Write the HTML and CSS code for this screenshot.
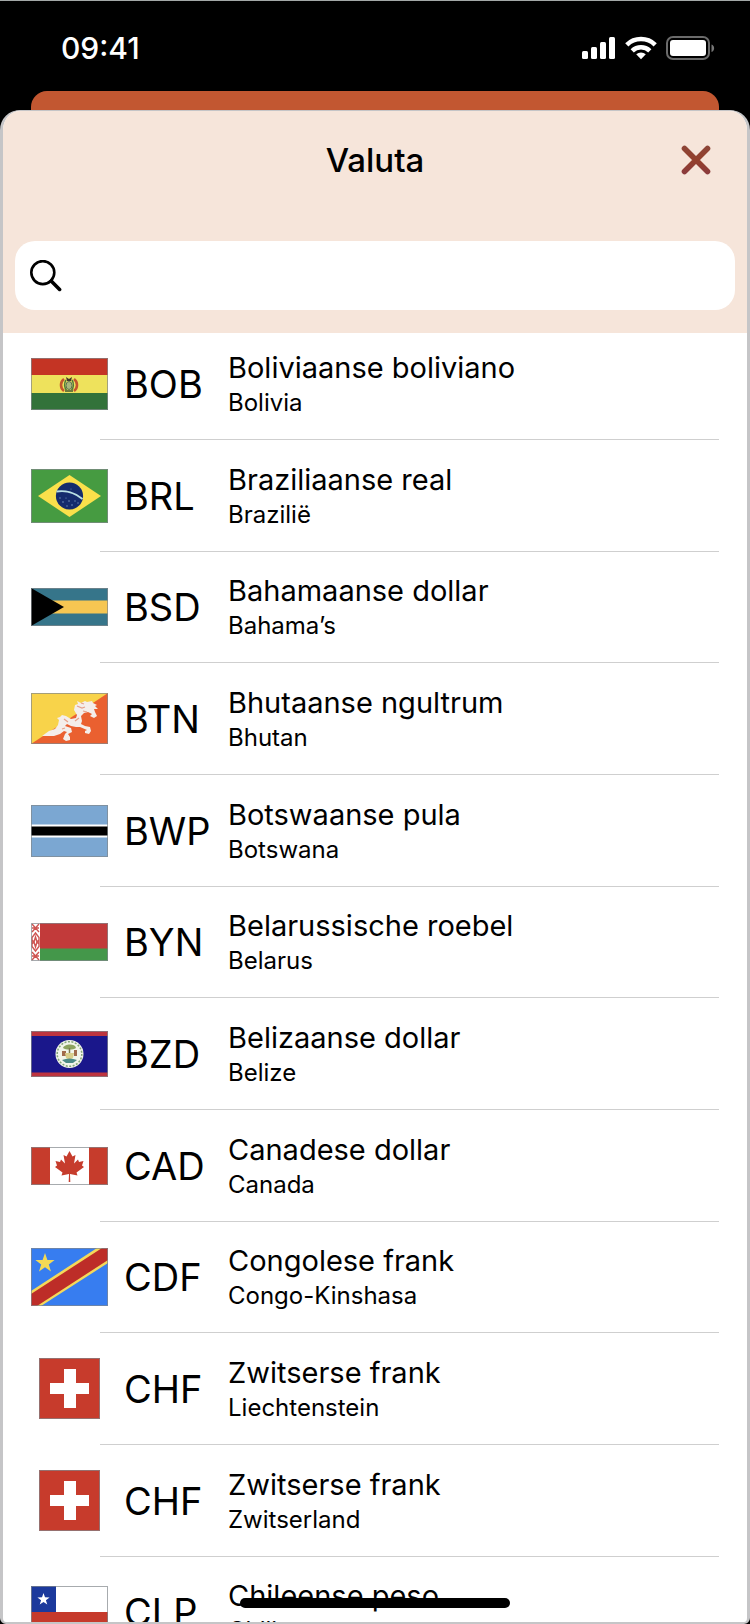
FILE: index.html
```html
<!DOCTYPE html>
<html lang="nl">
<head>
    <meta charset="UTF-8">
    <meta name="viewport" content="width=device-width, initial-scale=1.0">
    <title>Valuta</title>
    <link rel="stylesheet" href="styles.css">
</head>
<body>
    <div class="status-bar">
        <span class="time">09:41</span>
        <div class="status-icons">
            <svg width="34" height="24" viewBox="0 0 34 24" fill="#fff">
                <rect x="0" y="15" width="6" height="8" rx="1.5"/>
                <rect x="9" y="11" width="6" height="12" rx="1.5"/>
                <rect x="18" y="6" width="6" height="17" rx="1.5"/>
                <rect x="27" y="1" width="6" height="22" rx="1.5"/>
            </svg>
            <svg width="32" height="24" viewBox="0 0 32 24" fill="none" stroke="#fff" stroke-width="4.6">
                <path d="M1.8 8.800a20.400 20.400 0 0 1 28.400 0"/>
                <path d="M7.200 14.800a12.700 12.700 0 0 1 17.600 0"/>
                <path d="M16 23.200l-4.800-4.900a7 7 0 0 1 9.600 0z" fill="#fff" stroke="none"/>
            </svg>
            <svg width="50" height="24" viewBox="0 0 50 24">
                <rect x="1" y="1" width="42" height="22" rx="6" fill="none" stroke="#6b6b6b" stroke-width="2"/>
                <rect x="4" y="4" width="36" height="16" rx="3" fill="#fff"/>
                <path d="M45.500 8.500c3.500 1 3.500 6.500 0 7.500z" fill="#777"/>
            </svg>
        </div>
    </div>

    <div class="back-card"></div>

    <main class="sheet">
        <header class="sheet-header">
            <div class="title-row">
                <h1>Valuta</h1>
                <button class="close-btn" type="button" aria-label="Sluiten">
                    <svg width="30" height="30" viewBox="0 0 30 30">
                        <defs>
                            <linearGradient id="closeFill" x1="0" y1="0" x2="0" y2="30" gradientUnits="userSpaceOnUse">
                                <stop offset="0" stop-color="#8c4538"/>
                                <stop offset="0.5" stop-color="#94402c"/>
                                <stop offset="1" stop-color="#8a3a3e"/>
                            </linearGradient>
                        </defs>
                        <path d="M3.500 3.500l23 23M26.500 3.500l-23 23" stroke="url(#closeFill)" stroke-width="5.600" stroke-linecap="round"/>
                    </svg>
                </button>
            </div>
            <label class="search">
                <svg width="32" height="32" viewBox="0 0 32 32" fill="none" stroke="#000" stroke-linecap="round">
                    <circle cx="12.800" cy="12.600" r="11.500" stroke-width="2.600"/>
                    <path d="M21.200 21l8.400 8.400" stroke-width="3.600"/>
                </svg>
                <input type="search" aria-label="Zoeken">
            </label>
        </header>

        <ul class="currency-list">
            <li>
                <button class="currency" type="button">
                    <svg class="flag" width="77" height="52" viewBox="0 0 77 52">
                        <path fill="#c43424" d="M0 0h77v18H0z"/>
                        <path fill="#eee25c" d="M0 17h77v18H0z"/>
                        <path fill="#32723a" d="M0 35h77v17H0z"/>
                        <path d="M33 21c-4 3-4 9 0 12M43 21c4 3 4 9 0 12" fill="none" stroke="#c4562e" stroke-width="2.600"/>
                        <path d="M35 22c-2 3-2 8 1 11M41 22c2 3 2 8-1 11" fill="none" stroke="#4d7a3c" stroke-width="1.500"/>
                        <ellipse cx="38" cy="27.500" rx="3" ry="4" fill="#a9b87c" stroke="#5b7252"/>
                        <path d="M35 19l3 2 3-2-1 4h-4z" fill="#41392c"/>
                        <path d="M34 33h8" stroke="#6d7a3b" stroke-width="2"/>
                    </svg>
                    <span class="code">BOB</span>
                    <span class="info"><span class="name">Boliviaanse boliviano</span><span class="country">Bolivia</span></span>
                </button>
            </li>
            <li>
                <button class="currency" type="button">
                    <svg class="flag" width="77" height="54" viewBox="0 0 77 54">
                        <path fill="#469b41" d="M0 0h77v54H0z"/>
                        <path fill="#fae04b" d="M38.500 6L70 27 38.500 48 7 27z"/>
                        <circle cx="38.500" cy="27" r="13.600" fill="#142b6d"/>
                        <path d="M25.500 22.500c9-1.500 19 1.500 26 7.500" fill="none" stroke="#b9e0e5" stroke-width="1.800"/>
                        <g fill="#7391c0">
                            <circle cx="29" cy="29" r=".7"/><circle cx="32" cy="33" r=".8"/><circle cx="35" cy="29" r=".6"/>
                            <circle cx="38" cy="32" r=".8"/><circle cx="41" cy="36" r=".8"/><circle cx="44" cy="32" r=".7"/>
                            <circle cx="36" cy="37" r=".7"/><circle cx="47" cy="34" r=".7"/><circle cx="40" cy="20" r=".5"/>
                        </g>
                    </svg>
                    <span class="code">BRL</span>
                    <span class="info"><span class="name">Braziliaanse real</span><span class="country">Brazilië</span></span>
                </button>
            </li>
            <li>
                <button class="currency" type="button">
                    <svg class="flag" width="77" height="38" viewBox="0 0 77 38">
                        <path fill="#36758a" d="M0 0h77v38H0z"/>
                        <path fill="#f6c652" d="M0 12.500h77v13H0z"/>
                        <path d="M0 0l33 19L0 38z"/>
                    </svg>
                    <span class="code">BSD</span>
                    <span class="info"><span class="name">Bahamaanse dollar</span><span class="country">Bahama’s</span></span>
                </button>
            </li>
            <li>
                <button class="currency" type="button">
                    <svg class="flag" width="77" height="51" viewBox="0 0 77 51">
                        <path fill="#f8d34a" d="M0 0h77v51H0z"/>
                        <path fill="#ea6030" d="M77 0v51H0z"/>
                        <path fill="#f4eeeb" d="M11 43l7-5 6-2 3-4 1-5-2-2 3-1 2-2 4 1 5 3 5-1 1-3-3-5 1-5 3-1-1-3 4 2 4-2 2 1 5-1 1 2 4 2-2 1 3 3-4 0 1 3 2 4-3 2-4-2 2-2-4-2-4 1-3 3 1 5-1 3 4 2 5 1 1 4-2 3-4-1 0-2 2-1-7-3-4 0-5-1-4-2-2 2 6 2 1 4-4 2 2 3 0 3-4 1-3-2 2-5 2-2-3-1-4 3-6 2z"/>
                        <path d="M46 13l5 2 3-1M52 18l4 1M31 36l3-1M44 28l4-3M50 10l3 1M33 26l4 3" stroke="#e6a08a" stroke-width="1.200" fill="none"/>
                    </svg>
                    <span class="code">BTN</span>
                    <span class="info"><span class="name">Bhutaanse ngultrum</span><span class="country">Bhutan</span></span>
                </button>
            </li>
            <li>
                <button class="currency" type="button">
                    <svg class="flag" width="77" height="52" viewBox="0 0 77 52">
                        <path fill="#7ba7d2" d="M0 0h77v52H0z"/>
                        <path fill="#fff" d="M0 19.500h77v13H0z"/>
                        <path d="M0 21.500h77v9H0z"/>
                    </svg>
                    <span class="code">BWP</span>
                    <span class="info"><span class="name">Botswaanse pula</span><span class="country">Botswana</span></span>
                </button>
            </li>
            <li>
                <button class="currency" type="button">
                    <svg class="flag" width="77" height="38" viewBox="0 0 77 38">
                        <path fill="#c23a3a" d="M0 0h77v26H0z"/>
                        <path fill="#44974a" d="M0 25.500h77V38H0z"/>
                        <path fill="#fff" d="M0 0h9v38H0z"/>
                        <g fill="none" stroke="#cf5552" stroke-width="1.400">
                            <path d="M1 1l3.500 4L8 1M1 9l3.500-4L8 9M1 5h7M4.500 10L1 14.500v9L4.500 28 8 23.500v-9zM4.500 14L3 19l1.500 5L6 19zM1 29l3.500 4L8 29M1 37l3.500-4L8 37M1 33h7M1 17l2 2-2 2M8 17l-2 2 2 2"/>
                        </g>
                    </svg>
                    <span class="code">BYN</span>
                    <span class="info"><span class="name">Belarussische roebel</span><span class="country">Belarus</span></span>
                </button>
            </li>
            <li>
                <button class="currency" type="button">
                    <svg class="flag" width="77" height="46" viewBox="0 0 77 46">
                        <path fill="#1a178b" d="M0 0h77v46H0z"/>
                        <path fill="#bd343f" d="M0 0h77v5H0zM0 41.500h77V46H0z"/>
                        <circle cx="38.500" cy="23" r="14" fill="#f2f5ea"/>
                        <circle cx="38.500" cy="23" r="12.300" fill="none" stroke="#84a679" stroke-width="1.500" stroke-dasharray="2 1.500"/>
                        <path d="M32 17c1-4 12-5 13 0-3 2-10 2-13 0z" fill="#8ca35f"/>
                        <path d="M38.500 17v7" stroke="#7c7951" stroke-width="1.500"/>
                        <path d="M31 20h4v5h-4zM43 19h3v6h-3z" fill="#a16b4c"/>
                        <path d="M34 22h9l-1 5-3.500 2L35 27z" fill="#d9cf8c"/>
                        <path d="M31 29c5-2 10-2 15 0l-4 3h-7z" fill="#4c8b86"/>
                    </svg>
                    <span class="code">BZD</span>
                    <span class="info"><span class="name">Belizaanse dollar</span><span class="country">Belize</span></span>
                </button>
            </li>
            <li>
                <button class="currency" type="button">
                    <svg class="flag" width="77" height="38" viewBox="0 0 77 38">
                        <path fill="#fff" d="M0 0h77v38H0z"/>
                        <path fill="#c63c2c" d="M0 0h19v38H0zM58 0h19v38H58z"/>
                        <path fill="#c63c2c" d="M38.500 4l-3 5.500-3-1.500 1.500 8.500-4-4-1 2.500-4.500-1 1.500 4.500-2 1.500 7.500 5.500-1 3 7.500-1.500-.3 8h1.600l-.3-8 7.500 1.500-1-3 7.500-5.500-2-1.500 1.500-4.500-4.500 1-1-2.500-4 4L44.500 8l-3 1.500z"/>
                    </svg>
                    <span class="code">CAD</span>
                    <span class="info"><span class="name">Canadese dollar</span><span class="country">Canada</span></span>
                </button>
            </li>
            <li>
                <button class="currency" type="button">
                    <svg class="flag" width="77" height="58" viewBox="0 0 77 58">
                        <path fill="#377df0" d="M0 0h77v58H0z"/>
                        <path fill="#f4d95a" d="M0 43L66 0h11v15L10 58H0z"/>
                        <path fill="#bd2d28" d="M0 46L71 0h6v12L6 58H0z"/>
                        <path fill="#f3d955" d="M14 5l2.400 6.900 7.200.1-5.800 4.400 2.200 7.100-6-4.200-6 4.200 2.200-7.100L4.400 12l7.200-.1z"/>
                    </svg>
                    <span class="code">CDF</span>
                    <span class="info"><span class="name">Congolese frank</span><span class="country">Congo-Kinshasa</span></span>
                </button>
            </li>
            <li>
                <button class="currency" type="button">
                    <svg class="flag" width="61" height="61" viewBox="0 0 61 61">
                        <path fill="#c73b2c" d="M0 0h61v61H0z"/>
                        <path fill="#fff" d="M25 11h12v14h13v11H37v14H25V36H11V25h14z"/>
                    </svg>
                    <span class="code">CHF</span>
                    <span class="info"><span class="name">Zwitserse frank</span><span class="country">Liechtenstein</span></span>
                </button>
            </li>
            <li>
                <button class="currency" type="button">
                    <svg class="flag" width="61" height="61" viewBox="0 0 61 61">
                        <path fill="#c73b2c" d="M0 0h61v61H0z"/>
                        <path fill="#fff" d="M25 11h12v14h13v11H37v14H25V36H11V25h14z"/>
                    </svg>
                    <span class="code">CHF</span>
                    <span class="info"><span class="name">Zwitserse frank</span><span class="country">Zwitserland</span></span>
                </button>
            </li>
            <li>
                <button class="currency" type="button">
                    <svg class="flag" width="77" height="52" viewBox="0 0 77 52">
                        <path fill="#fff" d="M0 0h77v26H0z"/>
                        <path fill="#c63a2b" d="M0 26h77v26H0z"/>
                        <path fill="#1b399c" d="M0 0h25v26H0z"/>
                        <path fill="#fff" d="M12.500 7l1.500 4.300 4.600.1-3.700 2.800 1.400 4.400-3.800-2.700-3.800 2.700 1.400-4.400-3.700-2.800 4.600-.1z"/>
                    </svg>
                    <span class="code">CLP</span>
                    <span class="info"><span class="name">Chileense peso</span><span class="country">Chili</span></span>
                </button>
            </li>
        </ul>
    </main>

    <div class="home-indicator"></div>
</body>
</html>
```

FILE: styles.css
```css
* {
    margin: 0;
    padding: 0;
    box-sizing: border-box;
}

body {
    font-family: Inter, 'Liberation Sans', sans-serif;
    background: #000;
    color: #000;
    height: 100vh;
    display: flex;
    flex-direction: column;
    overflow: hidden;
    border-top: 1px solid #a3a8a7;
}

button {
    font: inherit;
    color: inherit;
    background: none;
    border: none;
    cursor: pointer;
}

/* Status bar */
.status-bar {
    height: 90px;
    flex-shrink: 0;
    padding: 4px 34px 0 61px;
    display: flex;
    align-items: center;
    justify-content: space-between;
    color: #fff;
}

.time {
    font-size: 30px;
    font-weight: 500;
}

.status-icons {
    display: flex;
    align-items: center;
    gap: 9px;
}

/* Edge of the screen behind the sheet */
.back-card {
    height: 19px;
    flex-shrink: 0;
    margin: 0 31px;
    background: #c25731;
    border-radius: 16px 16px 0 0;
}

.sheet {
    flex: 1;
    min-height: 0;
    display: flex;
    flex-direction: column;
    background: #fff;
    border: solid #c5c5c7;
    border-width: 1px 3px 2px;
    border-radius: 20px 20px 6px 6px;
    overflow: hidden;
}

.sheet-header {
    background: #f6e5da;
    padding: 25px 12px 23px;
    z-index: 1;
}

.title-row {
    display: grid;
    grid-template-columns: 48px 1fr 48px;
    align-items: center;
    height: 48px;
    margin: 0 15px 57px;
}

h1 {
    grid-column: 2;
    font-size: 33px;
    font-weight: 500;
    text-align: center;
}

.close-btn {
    height: 48px;
    display: flex;
    align-items: center;
    justify-content: center;
}

.search {
    display: flex;
    align-items: center;
    gap: 12px;
    height: 69px;
    padding: 0 15px;
    background: #fff;
    border-radius: 20px;
}

.search input {
    flex: 1;
    min-width: 0;
    height: 48px;
    border: none;
    outline: none;
    background: none;
    font: inherit;
    font-size: 30px;
}

/* Currencies, first row scrolled slightly under the header */
.currency-list {
    list-style: none;
    flex: 1;
    min-height: 0;
    margin-top: -5px;
    display: grid;
    grid-auto-rows: 112px 112px 111px;
    overflow-y: auto;
    scrollbar-width: none;
}

.currency-list li {
    display: flex;
    flex-direction: column;
}

.currency-list li::after {
    content: '';
    height: 1px;
    margin: 0 28px 0 97px;
    background: #cfcfcf;
}

.currency {
    flex: 1;
    padding: 0 28px;
    display: grid;
    grid-template-columns: 77px 88px 1fr;
    column-gap: 16px;
    align-items: center;
    text-align: left;
}

.flag {
    display: block;
    justify-self: center;
    outline: 1px solid rgba(130, 135, 140, 0.7);
    outline-offset: -1px;
}

.code {
    font-size: 38px;
}

.name,
.country {
    display: block;
}

.name {
    font-size: 29px;
    line-height: 38px;
}

.country {
    font-size: 24px;
    line-height: 32px;
}

.home-indicator {
    position: absolute;
    left: 32%;
    right: 32%;
    bottom: 16px;
    height: 10px;
    background: #000;
    border-radius: 5px;
    z-index: 2;
}
```
